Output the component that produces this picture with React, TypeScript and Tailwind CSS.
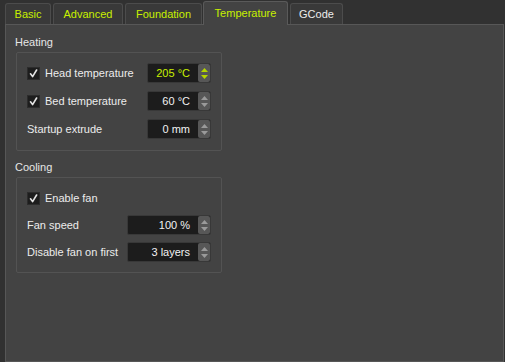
import React from "react";

const LIME = "#c8f000";

function Check() {
  return (
    <div className="w-[13px] h-[13px] bg-[#1d1d1d] border border-[#2c2c2c] flex items-center justify-center shrink-0">
      <svg width="9" height="9" viewBox="0 0 9 9">
        <path d="M1.5 4.8 L3.6 7.6 L7.6 1" fill="none" stroke="#e4e4e4" strokeWidth="1.6" strokeLinecap="round" strokeLinejoin="round" />
      </svg>
    </div>
  );
}

function Spin({ value, width, active }: { value: string; width: string; active?: boolean }) {
  const arrow = active ? "#b5d400" : "#9a9a9a";
  return (
    <div className={`${width} h-[20px] bg-[#1c1c1c] border border-[#383838] rounded-[2px] flex items-center`}>
      <span
        className="flex-1 text-right pr-[8px]"
        style={{ color: active ? LIME : "#f2f2f2" }}
      >
        {value}
      </span>
      <div className="w-[12px] h-[18px] bg-[#575757] rounded-[2px] flex flex-col items-center justify-center gap-[3px]">
        <svg width="7" height="4" viewBox="0 0 7 4">
          <path d="M0 4 L3.5 0 L7 4 Z" fill={arrow} />
        </svg>
        <svg width="7" height="4" viewBox="0 0 7 4">
          <path d="M0 0 L7 0 L3.5 4 Z" fill={arrow} />
        </svg>
      </div>
    </div>
  );
}

function Row({ label, checked, children }: { label: string; checked?: boolean; children?: React.ReactNode }) {
  return (
    <div className="h-[20px] flex items-center">
      {checked && <Check />}
      <span className={checked ? "ml-[5px] text-[#ececec]" : "text-[#ececec]"}>{label}</span>
      <div className="flex-1" />
      {children}
    </div>
  );
}

export default function App() {
  const tabs = [
    { name: "Basic", w: "w-[46px]" },
    { name: "Advanced", w: "w-[70px]" },
    { name: "Foundation", w: "w-[77px]" },
    { name: "Temperature", w: "w-[85px]", active: true },
    { name: "GCode", w: "w-[53px]", white: true },
  ];

  return (
    <div
      className="w-[505px] h-[362px] bg-[#313131] overflow-hidden flex flex-col text-[11px] leading-[14px]"
      style={{ fontFamily: '"Liberation Sans", Arial, sans-serif' }}
    >
      {/* Tab bar */}
      <div className="h-[24px] flex items-end pl-[5px] gap-[2px] relative z-10">
        {tabs.map((t) =>
          t.active ? (
            <div
              key={t.name}
              className={`${t.w} h-[24px] -mb-px -ml-px bg-[#434343] border border-b-0 border-[#5a5a5a] rounded-t-[3px] flex items-center justify-center pb-[1px]`}
              style={{ color: LIME }}
            >
              {t.name}
            </div>
          ) : (
            <div
              key={t.name}
              className={`${t.w} h-[21px] bg-[#393939] border border-b-0 border-[#4c4c4c] rounded-t-[3px] flex items-center justify-center`}
              style={{ color: t.white ? "#ececec" : LIME }}
            >
              {t.name}
            </div>
          )
        )}
      </div>

      {/* Panel */}
      <div className="ml-[5px] w-[499px] flex-1 bg-[#434343] border border-[#575757] px-[10px] pt-[10px]">
        <div className="-ml-px text-[#e6e6e6] h-[14px]">Heating</div>
        <div className="mt-[3px] w-[206px] border border-[#535353] rounded-[2px] pl-[10px] pr-[10px] pt-[10px] pb-[11px] flex flex-col gap-[8px]">
          <Row label="Head temperature" checked>
            <Spin value="205 °C" width="w-[64px]" active />
          </Row>
          <Row label="Bed temperature" checked>
            <Spin value="60 °C" width="w-[64px]" />
          </Row>
          <Row label="Startup extrude">
            <Spin value="0 mm" width="w-[64px]" />
          </Row>
        </div>

        <div className="-ml-px mt-[9px] text-[#e6e6e6] h-[14px]">Cooling</div>
        <div className="mt-[3px] w-[206px] border border-[#535353] rounded-[2px] pl-[10px] pr-[10px] pt-[10px] pb-[10px] flex flex-col gap-[7px]">
          <Row label="Enable fan" checked />
          <Row label="Fan speed">
            <Spin value="100 %" width="w-[84px]" />
          </Row>
          <Row label="Disable fan on first">
            <Spin value="3 layers" width="w-[84px]" />
          </Row>
        </div>
      </div>
    </div>
  );
}
